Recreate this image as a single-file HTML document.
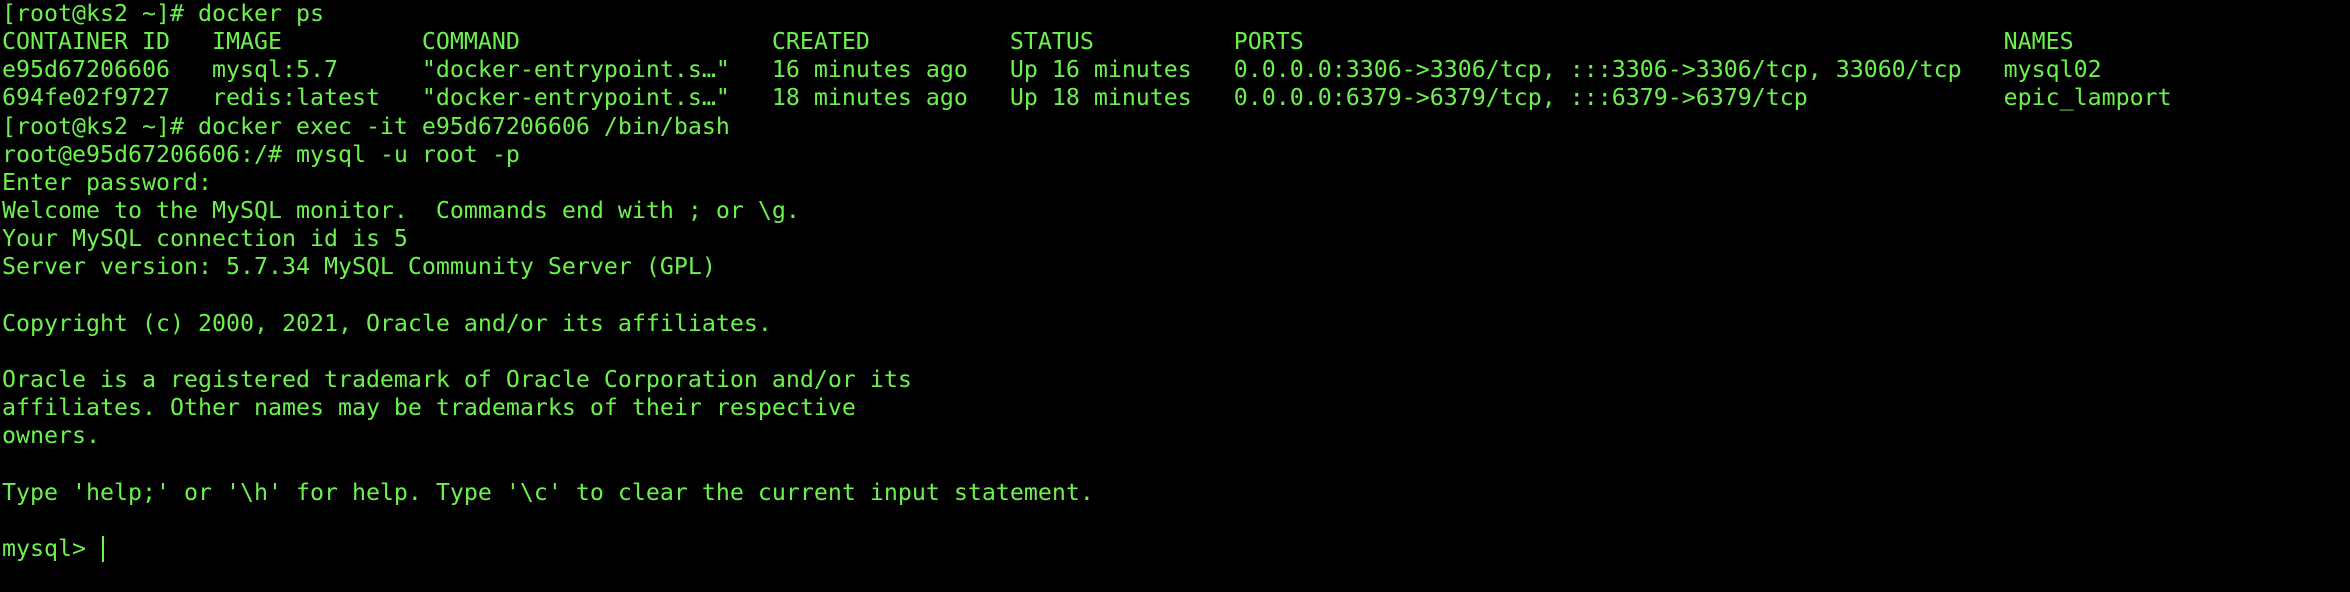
<!DOCTYPE html>
<html><head><meta charset="utf-8"><style>
html,body{margin:0;padding:0;background:#000;width:2350px;height:592px;overflow:hidden}
pre{margin:0;position:absolute;left:2px;top:0px;font-family:"DejaVu Sans Mono","Liberation Mono",monospace;font-size:23.25px;line-height:28.16px;color:#6cf24e;white-space:pre}
.cur{display:inline-block;width:2px;height:26px;background:#6cf24e;vertical-align:-6px;margin-left:2px}
</style></head><body><pre>[root@ks2 ~]# docker ps
CONTAINER ID   IMAGE          COMMAND                  CREATED          STATUS          PORTS                                                  NAMES
e95d67206606   mysql:5.7      "docker-entrypoint.s…"   16 minutes ago   Up 16 minutes   0.0.0.0:3306-&gt;3306/tcp, :::3306-&gt;3306/tcp, 33060/tcp   mysql02
694fe02f9727   redis:latest   "docker-entrypoint.s…"   18 minutes ago   Up 18 minutes   0.0.0.0:6379-&gt;6379/tcp, :::6379-&gt;6379/tcp              epic_lamport
[root@ks2 ~]# docker exec -it e95d67206606 /bin/bash
root@e95d67206606:/# mysql -u root -p
Enter password:
Welcome to the MySQL monitor.  Commands end with ; or \g.
Your MySQL connection id is 5
Server version: 5.7.34 MySQL Community Server (GPL)

Copyright (c) 2000, 2021, Oracle and/or its affiliates.

Oracle is a registered trademark of Oracle Corporation and/or its
affiliates. Other names may be trademarks of their respective
owners.

Type 'help;' or '\h' for help. Type '\c' to clear the current input statement.

mysql&gt; <span class="cur"></span></pre></body></html>
